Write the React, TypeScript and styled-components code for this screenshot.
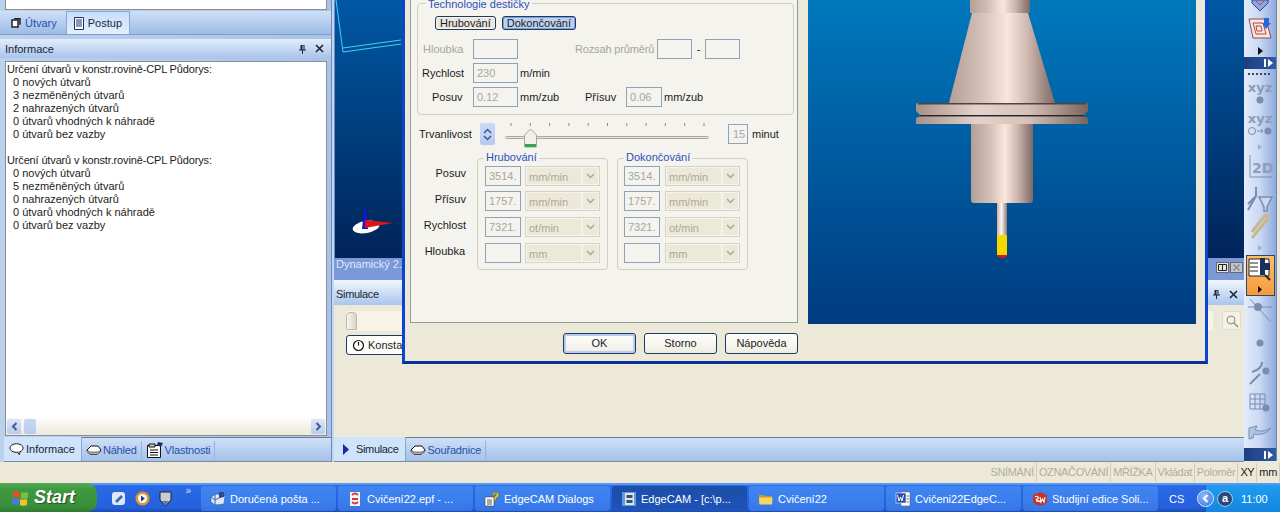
import React from "react";
import styled, { createGlobalStyle, css } from "styled-components";

const Global = createGlobalStyle`
  html, body { margin: 0; padding: 0; background: #ece9d8; overflow: hidden; }
  * { box-sizing: border-box; }
`;

const Screen = styled.div`
  position: relative;
  width: 1280px;
  height: 512px;
  overflow: hidden;
  display: flex;
  flex-direction: column;
  background: #ece9d8;
  font-family: "Liberation Sans", Arial, sans-serif;
  font-size: 11px;
  color: #1c1c1c;
`;
const Workspace = styled.div`
  display: flex;
  height: 462px;
  background: #c4d7ef;
`;
const LeftColumn = styled.div`
  width: 331px;
  display: flex;
  flex-direction: column;
  background: linear-gradient(90deg, #bcd1ee, #a9c3e8);
  padding-left: 5px;
  padding-right: 4px;
`;
const TopBox = styled.div`
  height: 10px;
  background: #fff;
  border: 1px solid #8a8f96;
  border-top: 0;
`;
const TopTabs = styled.div`
  height: 24px;
  margin: 1px -4px 0 -5px;
  display: flex;
  align-items: stretch;
  padding-left: 2px;
  background: linear-gradient(#cfe0f7, #9dbbe6);
  border-bottom: 1px solid #7f9dc6;
`;
const TopTab = styled.div<{ $active?: boolean }>`
  display: flex;
  align-items: center;
  gap: 4px;
  padding: 0 9px 0 9px;
  color: ${(p) => (p.$active ? "#1c2a3c" : "#2450a8")};
  ${(p) =>
    p.$active &&
    css`
      background: linear-gradient(#c9def8, #e2effc);
      border: 1px solid #8ba6cc;
      border-bottom: 0;
      padding: 0 7px 0 7px;
    `}
`;
const PanelHeader = styled.div`
  height: 19px;
  margin: 4px -4px 0 -5px;
  padding: 0 7px 0 5px;
  display: flex;
  align-items: center;
  justify-content: space-between;
  background: linear-gradient(#e1edfb, #a9c5ec);
  color: #1c2533;
`;
const PanelButtons = styled.div`
  display: flex;
  align-items: center;
  gap: 8px;
`;
const InfoBox = styled.div`
  margin-top: 3px;
  height: 375px;
  display: flex;
  flex-direction: column;
  background: #fff;
  border: 1px solid #8a8f96;
`;
const InfoText = styled.div`
  flex: 1;
  padding: 1px;
  line-height: 13px;
`;
const InfoLine = styled.div<{ $indent?: boolean }>`
  height: 13px;
  white-space: pre;
  padding-left: ${(p) => (p.$indent ? 6 : 0)}px;
  letter-spacing: ${(p) => (p.$indent ? 0 : -0.15)}px;
`;
const HScroll = styled.div`
  height: 17px;
  display: flex;
  justify-content: space-between;
  background: linear-gradient(#fcfbf7, #ece9dd);
`;
const ScrollBtn = styled.div`
  width: 14px;
  height: 15px;
  margin: 1px;
  background: linear-gradient(#dce6f8, #b9cbee);
  border-radius: 2px;
  display: flex;
  align-items: center;
  justify-content: center;
`;
const Thumb = styled.div`
  width: 12px;
  height: 15px;
  margin-top: 1px;
  margin-left: 2px;
  background: linear-gradient(#c9d8f3, #b9cbee);
  border-radius: 2px;
`;
const ScrollLeft = styled.div`
  display: flex;
`;
const BottomTabs = styled.div`
  height: 25px;
  margin: 1px -4px 0 -1px;
  display: flex;
  align-items: stretch;
  background: linear-gradient(#cfe0f7, #a4c1ea);
  border-top: 1px solid #6b7d96;
  border-bottom: 1px solid #7e8a9a;
`;
const BottomTab = styled.div<{ $active?: boolean }>`
  display: flex;
  align-items: center;
  gap: 1px;
  padding: 0 6px 0 5px;
  color: ${(p) => (p.$active ? "#1c2533" : "#2450a8")};
  ${(p) =>
    p.$active
      ? css`
          background: #cfe3fb;
          margin-top: -1px;
          border-right: 1px solid #8ba6cc;
        `
      : css`
          padding: 0 4px 0 4px;
          margin: 3px 0 2px;
          border-right: 1px solid #9cb1cf;
          letter-spacing: -0.2px;
        `}
`;
const Center = styled.div`
  position: relative;
  width: 913px;
  padding-left: 3px;
  display: flex;
  flex-direction: column;
  background: linear-gradient(90deg, #6f89b4 0, #6f89b4 1px, #c3d6f2 1px);
`;
const Viewport = styled.div`
  height: 258px;
  position: relative;
  background: linear-gradient(#0058a4, #002458);
  border-left: 1px solid #6f8fc4;
  overflow: hidden;
`;
const Sketch = styled.svg`
  position: absolute;
  left: 0;
  top: 0;
`;
const ViewCaption = styled.div`
  height: 22px;
  padding: 0 1px 0 2px;
  line-height: 13px;
  display: flex;
  align-items: flex-start;
  justify-content: space-between;
  background: #7b98d8;
  color: #dfe7fa;
  white-space: nowrap;
`;
const CaptionButtons = styled.div`
  display: flex;
  gap: 1px;
  margin-top: 4px;
`;
const CapBtn = styled.div<{ $off?: boolean }>`
  width: 13px;
  height: 11px;
  background: ${(p) => (p.$off ? "#c3c5c8" : "#e4e3dc")};
  border: 1px solid #6a6a6a;
  display: flex;
  align-items: center;
  justify-content: center;
`;
const SimHeader = styled(PanelHeader)`
  margin: 0;
  height: 25px;
  padding: 3px 6px 0 2px;
  letter-spacing: -0.3px;
  background: linear-gradient(#f2f6fd, #a9c5ec);
`;
const SimBody = styled.div`
  flex: 1;
  background: #ece9d8;
  padding: 6px 3px 0 12px;
`;
const SimRow = styled.div`
  display: flex;
  justify-content: space-between;
  align-items: flex-start;
  gap: 9px;
`;
const SimTrack = styled.div`
  flex: 1;
  height: 20px;
  background: #f6f4e8;
  border-radius: 3px;
`;
const SimHandle = styled.div`
  position: absolute;
  width: 11px;
  height: 18px;
  margin-top: 1px;
  background: linear-gradient(90deg, #f8f6ee, #d8d4c4);
  border: 1px solid #bdb9a8;
  border-radius: 4px 4px 1px 1px;
`;
const SearchBtn = styled.div`
  width: 19px;
  height: 19px;
  background: #f4f2e6;
  border: 1px solid #e0dccb;
  border-radius: 3px;
  display: flex;
  align-items: center;
  justify-content: center;
`;
const SimButton = styled.div`
  margin-top: 4px;
  width: 70px;
  height: 20px;
  display: flex;
  align-items: center;
  gap: 3px;
  padding-left: 5px;
  background: #fdfdfa;
  border: 1px solid #1d3a64;
  border-radius: 3px;
`;
const CenterTabs = styled(BottomTabs)`
  margin: 0;
`;
const Dialog = styled.div`
  position: absolute;
  left: 71px;
  top: 0;
  width: 806px;
  height: 364px;
  background: #ece9d8;
  border: 3px solid #0a44d0;
  border-top: 0;
  border-bottom-color: #0a2f9c;
  display: flex;
  flex-direction: column;
`;
const DialogMain = styled.div`
  display: flex;
  height: 324px;
  padding-left: 5px;
`;
const FormPanel = styled.div`
  width: 388px;
  height: 323px;
  background: #f4f3ee;
  border: 1px solid #919b9c;
  border-top: 0;
  padding: 3px 3px 0 6px;
`;
const Group = styled.fieldset`
  margin: 0;
  padding: 0;
  min-width: 0;
  border: 1px solid #d0d0bf;
  border-radius: 4px;
`;
const TechGroup = styled(Group)`
  height: 112px;
  padding: 0 0 0 4px;
  position: relative;
`;
const Legend = styled.div<{ $left?: number; $top?: number }>`
  position: absolute;
  top: ${(p) => p.$top ?? -8}px;
  left: ${(p) => p.$left ?? 8}px;
  padding: 0 2px;
  background: #f4f3ee;
  color: #2c50bc;
  line-height: 13px;
  white-space: nowrap;
`;
const TechButtons = styled.div`
  display: flex;
  gap: 6px;
  margin: 12px 0 0 13px;
`;
const ToggleBtn = styled.div<{ $on?: boolean }>`
  height: 14px;
  padding: 0 4px;
  line-height: 12px;
  border: 1px solid #1d3a64;
  border-radius: 3px;
  color: #1c1c1c;
  background: ${(p) => (p.$on ? "#bcd0ef" : "#e9e7dc")};
  box-shadow: inset 0 0 0 1px ${(p) => (p.$on ? "#7f9fd8" : "#f7f5ea")};
`;
const FieldRow = styled.div<{ $top: number }>`
  display: flex;
  align-items: center;
  height: 20px;
  margin-top: ${(p) => p.$top}px;
`;
const RowLabel = styled.div<{ $w: number; $muted?: boolean; $pad?: number }>`
  width: ${(p) => p.$w}px;
  padding-left: ${(p) => p.$pad ?? 0}px;
  color: ${(p) => (p.$muted ? "#a6a69c" : "#1c1c1c")};
  white-space: nowrap;
  flex: none;
`;
const RangeLabel = styled(RowLabel)`
  letter-spacing: -0.15px;
`;
const Input = styled.div<{ $w: number; $pad?: number }>`
  width: ${(p) => p.$w}px;
  height: 20px;
  flex: none;
  border: 1px solid #8ea2b8;
  background: #f4f3ee;
  color: #a7a79d;
  padding-left: ${(p) => p.$pad ?? 3}px;
  line-height: 18px;
  white-space: nowrap;
  overflow: hidden;
`;
const Unit = styled.div<{ $w?: number }>`
  margin-left: 2px;
  width: ${(p) => (p.$w ? `${p.$w}px` : "auto")};
  white-space: nowrap;
  flex: none;
`;
const RangeDash = styled.div`
  width: 13px;
  text-align: center;
  flex: none;
`;
const LifeRow = styled.div`
  display: flex;
  align-items: center;
  height: 26px;
  margin-top: 6px;
`;
const LifeLabel = styled.div`
  margin-left: 2px;
  width: 61px;
`;
const Spinner = styled.div`
  width: 15px;
  height: 22px;
  background: linear-gradient(#cdd9f6, #b8c9f0);
  border-radius: 2px;
  display: flex;
  flex-direction: column;
  align-items: center;
  justify-content: center;
  gap: 1px;
`;
const Slider = styled.div`
  width: 205px;
  height: 26px;
  margin-left: 10px;
`;
const Lifetime = styled.div`
  margin-left: 18px;
  display: flex;
  align-items: center;
  gap: 4px;
`;
const CutGroups = styled.div`
  display: flex;
  margin-top: 11px;
`;
const CutLabels = styled.div`
  width: 56px;
  padding-top: 2px;
`;
const CutLabel = styled.div<{ $r: number }>`
  height: 26px;
  line-height: 26px;
  text-align: right;
  padding-right: ${(p) => p.$r}px;
`;
const CutGroup = styled(Group)<{ $second?: boolean }>`
  position: relative;
  width: 131px;
  height: 112px;
  margin-left: ${(p) => (p.$second ? 9 : 4)}px;
  padding: 7px 0 0 ${(p) => (p.$second ? 6 : 7)}px;
`;
const CutRow = styled.div<{ $h: number; $gap: number }>`
  display: flex;
  gap: ${(p) => p.$gap}px;
  height: ${(p) => p.$h}px;
`;
const Select = styled.div`
  width: 75px;
  height: 20px;
  border: 1px solid #d6d3c4;
  padding: 1px;
  display: flex;
  background: #f4f3ee;
`;
const SelectValue = styled.div`
  flex: 1;
  background: #ece9d8;
  color: #aca899;
  padding-left: 2px;
  line-height: 18px;
`;
const SelectArrow = styled.div`
  width: 15px;
  margin-left: 2px;
  background: #ece9d8;
  display: flex;
  align-items: center;
  justify-content: center;
`;
const Preview = styled.div`
  position: relative;
  width: 388px;
  height: 324px;
  margin-left: 10px;
  background: linear-gradient(#0078bc, #003b80);
`;
const DialogButtons = styled.div`
  display: flex;
  gap: 8px;
  margin: 9px 0 0 158px;
`;
const DlgBtn = styled.div<{ $def?: boolean }>`
  width: 73px;
  height: 21px;
  text-align: center;
  line-height: 19px;
  border: 1px solid #1d3a64;
  border-radius: 3px;
  background: linear-gradient(#fefefd, #efede2);
  box-shadow: ${(p) => (p.$def ? "inset 0 0 0 2px #b6cdf0" : "none")};
`;
const Toolbar = styled.div`
  width: 36px;
  flex: none;
  padding-right: 3px;
  background: #ece9d8;
`;
const ToolStrip = styled.div`
  height: 461px;
  display: flex;
  flex-direction: column;
  align-items: center;
  background: linear-gradient(90deg, #e3ecfb 0%, #c9d8f3 50%, #8da9dc 100%);
  border-right: 1px solid #6e88b4;
`;
const ToolSlot = styled.div<{ $h: number }>`
  height: ${(p) => p.$h}px;
  width: 100%;
  display: flex;
  flex-direction: column;
  align-items: center;
  justify-content: center;
  flex: none;
`;
const ToolSpacer = styled.div`
  flex: 1;
`;
const Band = styled.div<{ $h: number }>`
  width: 100%;
  height: ${(p) => p.$h}px;
  flex: none;
  background: linear-gradient(90deg, #1c3f80, #2f5aa6);
  display: flex;
  align-items: center;
  justify-content: flex-end;
  padding-right: 3px;
`;
const Xyz = styled.div`
  font-family: "DejaVu Sans", sans-serif;
  font-weight: bold;
  font-size: 13px;
  line-height: 12px;
  color: #8e9cb4;
`;
const Orange = styled.div`
  width: 29px;
  height: 41px;
  flex: none;
  background: linear-gradient(#fbc06a, #f79a3c);
  border: 1px solid #34465e;
  display: flex;
  flex-direction: column;
  align-items: center;
  padding-top: 1px;
`;
const Status = styled.div`
  height: 21px;
  display: flex;
  justify-content: flex-end;
  align-items: stretch;
  padding: 1px 0;
  background: #ece9d8;
  letter-spacing: -0.35px;
`;
const StatusCell = styled.div<{ $on?: boolean }>`
  padding: 3px 2px 0 2px;
  border-right: 1px solid #cfccbb;
  color: ${(p) => (p.$on ? "#1c1c1c" : "#b0ad9c")};
  white-space: nowrap;
`;
const Taskbar = styled.div`
  height: 29px;
  display: flex;
  align-items: stretch;
  background: linear-gradient(#2f6fe6 0%, #2a69e6 10%, #2460dc 85%, #1b49b4 100%);
  border-top: 2px solid #5a97f2;
  color: #fff;
`;
const Start = styled.div`
  width: 97px;
  flex: none;
  margin-top: -2px;
  display: flex;
  align-items: center;
  gap: 4px;
  padding-left: 11px;
  background: linear-gradient(#5aa85a 0%, #3f9a3f 20%, #3a8e3a 80%, #2f7a2f 100%);
  border-radius: 0 10px 10px 0;
  font-style: italic;
  font-weight: bold;
  font-size: 18px;
  text-shadow: 1px 1px 1px #1e4e1e;
`;
const Quick = styled.div`
  width: 104px;
  flex: none;
  display: flex;
  align-items: center;
  gap: 9px;
  padding-left: 14px;
  position: relative;
`;
const QuickMore = styled.div`
  position: absolute;
  right: 10px;
  top: 1px;
  font-size: 10px;
  line-height: 10px;
  color: #cfe0ff;
`;
const Tasks = styled.div`
  display: flex;
  gap: 2px;
  margin-top: 1px;
  height: 25px;
`;
const Task = styled.div<{ $active?: boolean }>`
  width: 135px;
  display: flex;
  align-items: center;
  gap: 4px;
  padding-left: 9px;
  border-radius: 3px;
  white-space: nowrap;
  background: ${(p) =>
    p.$active
      ? "linear-gradient(#1c4ea8, #1e54b8)"
      : "linear-gradient(#3f85f0, #3a7cec 70%, #3573e2)"};
`;
const Tray = styled.div`
  flex: 1;
  display: flex;
  align-items: center;
`;
const Lang = styled.div`
  margin-left: 11px;
  width: 36px;
  flex: none;
`;
const TrayZone = styled.div`
  flex: 1;
  height: 100%;
  display: flex;
  align-items: center;
  gap: 3px;
  background: linear-gradient(#1f9cf0, #1485e2);
  border-left: 1px solid #0f5cc0;
`;
const Chevron = styled.div`
  width: 17px;
  height: 17px;
  flex: none;
  margin-left: -9px;
  border-radius: 50%;
  background: radial-gradient(circle at 40% 35%, #8fbdfa, #2f6fe0);
  border: 1px solid #e0ecff;
  display: flex;
  align-items: center;
  justify-content: center;
`;
const TrayIcon = styled.div`
  width: 16px;
  height: 16px;
  flex: none;
  border-radius: 50%;
  background: #2a4a7a;
  border: 1px solid #a8c8ee;
  font-size: 11px;
  font-weight: bold;
  line-height: 13px;
  text-align: center;
`;
const Clock = styled.div`
  margin-left: 5px;
`;

const Pin = () => (
  <svg width="9" height="10" viewBox="0 0 9 10">
    <path d="M2.500 1h4v4.500h1.500v1H1v-1h1.500zM4 6.500h1V10H4z" fill="#1c2533" />
    <path d="M4.500 1.500h1v4h-1z" fill="#c6d7ef" />
  </svg>
);
const CloseX = () => (
  <svg width="9" height="9" viewBox="0 0 9 9">
    <path d="M1 1l7 7M8 1L1 8" stroke="#1c2533" strokeWidth="1.600" />
  </svg>
);
const Bubble = () => (
  <svg width="16" height="14" viewBox="0 0 17 14">
    <ellipse cx="8" cy="6" rx="7" ry="4.600" fill="#fff" stroke="#111" />
    <path d="M9 10l2 3 1-3.600" fill="#fff" stroke="#111" />
  </svg>
);
const Slab = () => (
  <svg width="16" height="11" viewBox="0 0 16 11">
    <path d="M1 5l4-4h7l3 4-4 4H4z" fill="#fff" stroke="#111" />
    <path d="M1 5l3 2h8l3-2v1.500L11 9.500H4L1 6.500z" fill="#b0b0b0" stroke="#111" strokeWidth=".5" />
  </svg>
);
const Sheet = () => (
  <svg width="18" height="16" viewBox="0 0 18 16">
    <path d="M1.500 3.500h13v12h-13z" fill="#fff" stroke="#111" />
    <path d="M3 2h6v3H3z" fill="#c8c8c8" stroke="#111" />
    <path d="M4 8h8M4 10.500h8M4 13h8" stroke="#111" />
    <path d="M12 0l5 1-2 4-4-2z" fill="#1c2f5c" />
  </svg>
);
const Caret = () => (
  <svg width="9" height="6" viewBox="0 0 9 6">
    <path d="M1 1l3.500 3.500L8 1" fill="none" stroke="#aca899" strokeWidth="1.500" />
  </svg>
);
const ScrollArrow = ({ right }: { right?: boolean }) => (
  <svg width="7" height="9" viewBox="0 0 7 9">
    <path d={right ? "M1.500 1l3.500 3.500L1.500 8" : "M5.500 1L2 4.500 5.500 8"} fill="none" stroke="#3f5c8c" strokeWidth="2" />
  </svg>
);
const BandGlyph = () => (
  <svg width="9" height="8" viewBox="0 0 9 8">
    <path d="M0 0h2v8H0z" fill="#fff" />
    <path d="M4 0l5 4-5 4z" fill="#fff" />
  </svg>
);
const Win = () => (
  <svg width="19" height="18" viewBox="0 0 19 18">
    <path d="M2 3q3-1.500 7 0v6q-4-1.500-7 0z" fill="#e0502a" />
    <path d="M10 3q3 1.500 7 0v6q-4 1.500-7 0z" fill="#7cc043" />
    <path d="M1 10q3-1.500 7 0v6q-4-1.500-7 0z" fill="#3d7fe0" />
    <path d="M9 10q3 1.500 7 0v6q-4 1.500-7 0z" fill="#f2c230" />
  </svg>
);

const info = [
  ["Určení útvarů v konstr.rovině-CPL Půdorys:", false],
  ["0 nových útvarů", true],
  ["3 nezměněných útvarů", true],
  ["2 nahrazených útvarů", true],
  ["0 útvarů vhodných k náhradě", true],
  ["0 útvarů bez vazby", true],
  ["", false],
  ["Určení útvarů v konstr.rovině-CPL Půdorys:", false],
  ["0 nových útvarů", true],
  ["5 nezměněných útvarů", true],
  ["0 nahrazených útvarů", true],
  ["0 útvarů vhodných k náhradě", true],
  ["0 útvarů bez vazby", true],
] as [string, boolean][];

const cutRows = [
  { v: "3514.", u: "mm/min", h: 25 },
  { v: "1757.", u: "mm/min", h: 26 },
  { v: "7321.", u: "ot/min", h: 26 },
  { v: "", u: "mm", h: 26 },
];

const CutFields = ({ title, second }: { title: string; second?: boolean }) => (
  <CutGroup $second={second}>
    <Legend $left={6}>{title}</Legend>
    {cutRows.map((r, i) => (
      <CutRow key={i} $h={r.h} $gap={second ? 5 : 4}>
        <Input $w={36}>{r.v}</Input>
        <Select>
          <SelectValue>{r.u}</SelectValue>
          <SelectArrow><Caret /></SelectArrow>
        </Select>
      </CutRow>
    ))}
  </CutGroup>
);

const taskIcons: Record<string, React.ReactNode> = {
  mail: (
    <svg width="16" height="16" viewBox="0 0 16 16">
      <path d="M1 6l5-3 9 1-1 9-9 1-4-3z" fill="#dfe8f8" stroke="#3a5a90" strokeWidth=".6" />
      <path d="M5 3v11M1 6l4 3 10-5" fill="none" stroke="#3a6ab0" />
      <path d="M9 1h5v5l-5 1z" fill="#2a4a90" />
    </svg>
  ),
  epf: (
    <svg width="16" height="16" viewBox="0 0 16 16">
      <path d="M3 1h10v14H3z" fill="#f4f6fb" />
      <path d="M5 4q3-3 6 0M5 8h6M5 11q3 3 6 0" fill="none" stroke="#d03a3a" strokeWidth="1.800" />
    </svg>
  ),
  help: (
    <svg width="16" height="16" viewBox="0 0 16 16">
      <path d="M1 6h9v9H1z" fill="#fff" stroke="#444" strokeWidth=".6" />
      <path d="M3 9h5M3 11h5M3 13h5" stroke="#555" />
      <path d="M8 4q1-3 3.500-3t3.500 2.500q0 2-2.500 3.500l-.5 2.500h-2l.5-4q2-1 2-2t-1-1-1.500 2z" fill="#f0c820" stroke="#6a5410" strokeWidth=".5" />
    </svg>
  ),
  cam: (
    <svg width="16" height="16" viewBox="0 0 16 16">
      <rect x="1" y="1" width="14" height="14" fill="#5aa0e0" />
      <rect x="4" y="2" width="9" height="12" fill="#dfe4ea" />
      <path d="M5.500 4h6v3h-6zM5.500 9h6v3h-6z" fill="#39506e" />
    </svg>
  ),
  folder: (
    <svg width="16" height="16" viewBox="0 0 16 16">
      <path d="M1 4h5l1 1h7v8H1z" fill="#c89a28" />
      <path d="M1 6.500h13.500l-.5 7H1.500z" fill="#f4d66a" />
    </svg>
  ),
  word: (
    <svg width="16" height="16" viewBox="0 0 16 16">
      <path d="M6 1h9v14H6z" fill="#fff" stroke="#666" strokeWidth=".6" />
      <path d="M8 5h6M8 8h6M8 11h6" stroke="#777" />
      <rect x="1" y="2" width="10" height="10" fill="#2a4aa8" stroke="#fff" strokeWidth=".6" />
      <path d="M2.500 4l1.500 6 1.500-4 1.500 4 1.500-6" fill="none" stroke="#fff" />
    </svg>
  ),
  sw: (
    <svg width="16" height="16" viewBox="0 0 16 16">
      <path d="M8 1l7 3v8l-7 3-7-3V4z" fill="#c8322a" />
      <path d="M3 6q2-1.500 3 0t-1 2 2 2-3 0M8 6l1 5 1.500-3 1.500 3 1-5" fill="none" stroke="#fff" strokeWidth="1.100" />
    </svg>
  ),
};

const tasks = [
  { t: "Doručená pošta ...", i: "mail" },
  { t: "Cvičení22.epf - ...", i: "epf" },
  { t: "EdgeCAM Dialogs", i: "help" },
  { t: "EdgeCAM - [c:\\p...", i: "cam", active: true },
  { t: "Cvičení22", i: "folder" },
  { t: "Cvičeni22EdgeC...", i: "word" },
  { t: "Studijní edice Soli...", i: "sw" },
];

const Tool = () => (
  <svg width="388" height="324" viewBox="0 0 388 324" style={{ position: "absolute", left: 0, top: 0 }}>
    <defs>
      <linearGradient id="steel" x1="0" x2="1" y1="0" y2="0">
        <stop offset="0" stopColor="#b49f97" />
        <stop offset=".3" stopColor="#d4bfb6" />
        <stop offset=".55" stopColor="#fbe6dd" />
        <stop offset=".75" stopColor="#cdb6ad" />
        <stop offset="1" stopColor="#7c6a64" />
      </linearGradient>
      <linearGradient id="flange" x1="0" x2="1" y1="0" y2="0">
        <stop offset="0" stopColor="#a89088" />
        <stop offset=".35" stopColor="#e4d2ca" />
        <stop offset=".65" stopColor="#d8c2b8" />
        <stop offset="1" stopColor="#7a655e" />
      </linearGradient>
      <linearGradient id="shank" x1="0" x2="1" y1="0" y2="0">
        <stop offset="0" stopColor="#c8b4ac" />
        <stop offset=".45" stopColor="#fff4ee" />
        <stop offset="1" stopColor="#8d7a74" />
      </linearGradient>
    </defs>
    <rect x="162" y="0" width="60" height="13" fill="url(#steel)" />
    <path d="M164 13H220L247 103H141Z" fill="url(#steel)" />
    <path d="M108 104Q108 103 110 103H278Q280 103 280 104V111L276 115H112L108 111Z" fill="url(#flange)" />
    <rect x="110" y="103" width="168" height="1.500" fill="#54423c" />
    <rect x="112" y="115" width="164" height="1.500" fill="#2c2422" />
    <path d="M112 116.500H276L280 118V124H108V118Z" fill="url(#flange)" />
    <path d="M163 124H225V200Q225 203 222 203H166Q163 203 163 200Z" fill="url(#steel)" />
    <rect x="189" y="203" width="10" height="33" fill="url(#shank)" />
    <rect x="189" y="235" width="10" height="20" fill="#f4d800" />
    <path d="M189 255H199V256Q197 258 194 258Q191 258 189 256Z" fill="#d81818" />
  </svg>
);

export default function App() {
  return (
    <Screen>
      <Global />
      <Workspace>
        <LeftColumn>
          <TopBox />
          <TopTabs>
            <TopTab>
              <svg width="10" height="10" viewBox="0 0 10 10"><path d="M1 2h6v7H1z" fill="#fff" stroke="#222" strokeWidth="1.500" /><path d="M3 .8h6v6" fill="none" stroke="#222" strokeWidth="1.500" /></svg>
              Útvary
            </TopTab>
            <TopTab $active>
              <svg width="10" height="13" viewBox="0 0 10 13"><path d="M.5.500h9v12h-9z" fill="#fff" stroke="#1c2f6c" /><path d="M2 3h6M2 5h6M2 7h6M2 9h6" stroke="#1c2f6c" /></svg>
              Postup
            </TopTab>
          </TopTabs>
          <PanelHeader>
            Informace
            <PanelButtons><Pin /><CloseX /></PanelButtons>
          </PanelHeader>
          <InfoBox>
            <InfoText>
              {info.map(([t, ind], i) => (
                <InfoLine key={i} $indent={ind}>{t}</InfoLine>
              ))}
            </InfoText>
            <HScroll>
              <ScrollLeft>
                <ScrollBtn><ScrollArrow /></ScrollBtn>
                <Thumb />
              </ScrollLeft>
              <ScrollBtn><ScrollArrow right /></ScrollBtn>
            </HScroll>
          </InfoBox>
          <BottomTabs>
            <BottomTab $active><Bubble />Informace</BottomTab>
            <BottomTab><Slab />Náhled</BottomTab>
            <BottomTab><Sheet />Vlastnosti</BottomTab>
          </BottomTabs>
        </LeftColumn>
        <Center>
          <Viewport>
            <Sketch width="80" height="258" viewBox="0 0 80 258">
              <path d="M1 0L8 52M8 48L66 40M8 52L66 44" fill="none" stroke="#3fd4f4" strokeWidth="1" />
              <ellipse cx="31" cy="227" rx="13.500" ry="6" fill="#fff" transform="rotate(-10 31 227)" />
              <path d="M30 203L33 229L27 229Z" fill="#1414e0" />
              <path d="M30 220L58 223L30 228Z" fill="#e01414" />
            </Sketch>
          </Viewport>
          <ViewCaption>
            Dynamický 2.
            <CaptionButtons>
              <CapBtn>
                <svg width="9" height="7" viewBox="0 0 9 7"><path d="M.5.500h8v6h-8zM4.500.500v6" fill="none" stroke="#222" /></svg>
              </CapBtn>
              <CapBtn $off>
                <svg width="7" height="7" viewBox="0 0 7 7"><path d="M.5.500l6 6M6.500.500l-6 6" stroke="#888" strokeWidth="1.300" /></svg>
              </CapBtn>
            </CaptionButtons>
          </ViewCaption>
          <SimHeader>
            Simulace
            <PanelButtons><Pin /><CloseX /></PanelButtons>
          </SimHeader>
          <SimBody>
            <SimRow>
              <SimHandle />
              <SimTrack />
              <SearchBtn>
                <svg width="14" height="14" viewBox="0 0 14 14"><circle cx="6" cy="6" r="4" fill="none" stroke="#8a8a8a" /><path d="M9 9l4 4" stroke="#8a8a8a" strokeWidth="1.500" /></svg>
              </SearchBtn>
            </SimRow>
            <SimButton>
              <svg width="13" height="13" viewBox="0 0 13 13"><circle cx="6.500" cy="6.500" r="5" fill="#fff" stroke="#111" strokeWidth="1.200" /><path d="M6.500 3v3.500" stroke="#111" strokeWidth="1.200" /></svg>
              Konstan
            </SimButton>
          </SimBody>
          <CenterTabs style={{ letterSpacing: "-0.35px" }}>
            <BottomTab $active style={{ padding: "0 7px 0 8px", gap: 6 }}>
              <svg width="8" height="13" viewBox="0 0 8 13"><path d="M1 1l6 5.500L1 12z" fill="#1a2a9c" /></svg>
              Simulace
            </BottomTab>
            <BottomTab><Slab />Souřadnice</BottomTab>
          </CenterTabs>
          <Dialog>
            <DialogMain>
              <FormPanel>
                <TechGroup>
                  <Legend $top={-6}>Technologie destičky</Legend>
                  <TechButtons>
                    <ToggleBtn>Hrubování</ToggleBtn>
                    <ToggleBtn $on>Dokončování</ToggleBtn>
                  </TechButtons>
                  <FieldRow $top={9}>
                    <RowLabel $w={51} $muted $pad={1}>Hloubka</RowLabel>
                    <Input $w={45} />
                    <RangeLabel $w={139} $muted $pad={57}>Rozsah průměrů</RangeLabel>
                    <Input $w={35} />
                    <RangeDash>-</RangeDash>
                    <Input $w={35} />
                  </FieldRow>
                  <FieldRow $top={4}>
                    <RowLabel $w={51}>Rychlost</RowLabel>
                    <Input $w={45}>230</Input>
                    <Unit>m/min</Unit>
                  </FieldRow>
                  <FieldRow $top={4}>
                    <RowLabel $w={51} $pad={10}>Posuv</RowLabel>
                    <Input $w={45}>0.12</Input>
                    <Unit $w={65}>mm/zub</Unit>
                    <RowLabel $w={41}>Přísuv</RowLabel>
                    <Input $w={36}>0.06</Input>
                    <Unit>mm/zub</Unit>
                  </FieldRow>
                </TechGroup>
                <LifeRow>
                  <LifeLabel>Trvanlivost</LifeLabel>
                  <Spinner>
                    <svg width="9" height="6" viewBox="0 0 9 6"><path d="M1 5l3.500-3.500L8 5" fill="none" stroke="#3c5a94" strokeWidth="1.500" /></svg>
                    <svg width="9" height="6" viewBox="0 0 9 6"><path d="M1 1l3.500 3.500L8 1" fill="none" stroke="#3c5a94" strokeWidth="1.500" /></svg>
                  </Spinner>
                  <Slider>
                    <svg width="205" height="27" viewBox="0 0 205 27">
                      {Array.from({ length: 11 }).map((_, i) => (
                        <path key={i} d={`M${6 + i * 19.3} 2v3`} stroke="#888" />
                      ))}
                      <rect x=".5" y="15.500" width="203" height="2" rx="1" fill="#e8e6dc" stroke="#a8a89c" />
                      <path d="M19.500 14l6-6 6 6v12h-12z" fill="#f2f0e6" stroke="#a8a89c" />
                      <rect x="20" y="23" width="11" height="3" fill="#2fa84a" />
                    </svg>
                  </Slider>
                  <Lifetime>
                    <Input $w={20} $pad={4}>15</Input>
                    <span>minut</span>
                  </Lifetime>
                </LifeRow>
                <CutGroups>
                  <CutLabels>
                    <CutLabel $r={7}>Posuv</CutLabel>
                    <CutLabel $r={7}>Přísuv</CutLabel>
                    <CutLabel $r={7}>Rychlost</CutLabel>
                    <CutLabel $r={8}>Hloubka</CutLabel>
                  </CutLabels>
                  <CutFields title="Hrubování" />
                  <CutFields title="Dokončování" second />
                </CutGroups>
              </FormPanel>
              <Preview><Tool /></Preview>
            </DialogMain>
            <DialogButtons>
              <DlgBtn $def>OK</DlgBtn>
              <DlgBtn>Storno</DlgBtn>
              <DlgBtn>Nápověda</DlgBtn>
            </DialogButtons>
          </Dialog>
        </Center>
        <Toolbar>
          <ToolStrip>
            <ToolSlot $h={12}>
              <svg width="20" height="12" viewBox="0 0 20 12"><path d="M2 0h16v3l-8 8-8-8z" fill="#8ea6dc" stroke="#2c49a0" /><path d="M6 1l4 4 4-4" fill="none" stroke="#c04060" /></svg>
            </ToolSlot>
            <ToolSlot $h={32}>
              <svg width="24" height="24" viewBox="0 0 24 24"><path d="M1 3h17l5 19H5z" fill="#f4e8e0" stroke="#8a4a5a" /><path d="M5 7h10l3 11H8zM8 10h5l1 5H9z" fill="none" stroke="#c04040" /><path d="M16 2h5v5h2l-5 6-4-6h2z" fill="#2a66d8" /></svg>
            </ToolSlot>
            <ToolSlot $h={13}><svg width="5" height="8" viewBox="0 0 5 8"><path d="M0 0l5 4-5 4z" fill="#111" /></svg></ToolSlot>
            <Band $h={12}><BandGlyph /></Band>
            <ToolSlot $h={10}>
              <svg width="24" height="2" viewBox="0 0 24 2"><path d="M0 1h24" stroke="#33466a" strokeWidth="2" strokeDasharray="2 2" /></svg>
            </ToolSlot>
            <ToolSlot $h={27}>
              <Xyz>xyz</Xyz>
              <svg width="8" height="8" viewBox="0 0 8 8" style={{ marginTop: 2 }}><circle cx="4" cy="4" r="3.500" fill="#7a8cb0" /></svg>
            </ToolSlot>
            <ToolSlot $h={37}>
              <Xyz>xyz</Xyz>
              <svg width="24" height="10" viewBox="0 0 24 10" style={{ marginTop: 1 }}><circle cx="4" cy="5" r="3.500" fill="none" stroke="#7a8cb0" /><path d="M9 5h6M13 3l2 2-2 2" fill="none" stroke="#7a8cb0" /><circle cx="20" cy="5" r="3.500" fill="#7a8cb0" /></svg>
            </ToolSlot>
            <ToolSlot $h={7}><svg width="4" height="6" viewBox="0 0 4 6"><path d="M0 0l4 3-4 3z" fill="#9fb0cc" /></svg></ToolSlot>
            <ToolSlot $h={36}>
              <svg width="26" height="28" viewBox="0 0 26 28"><path d="M3 1v22h22" fill="none" stroke="#7a8cb0" /><text x="5" y="19" fontFamily="DejaVu Sans, sans-serif" fontSize="14" fontWeight="bold" fill="#8e9cb4">2D</text></svg>
            </ToolSlot>
            <ToolSlot $h={26}>
              <svg width="26" height="26" viewBox="0 0 26 26"><path d="M9 1v9L1 18M9 10l-8 14" fill="none" stroke="#7a8cb0" strokeWidth="2" /><path d="M12 11h13l-5 10v4h-3v-4z" fill="#ccd8ee" stroke="#7a8cb0" strokeWidth="1.500" /></svg>
            </ToolSlot>
            <ToolSlot $h={29}>
              <svg width="22" height="26" viewBox="0 0 22 26"><path d="M3 24L17 7q3-4 1-5t-5 3L3 18" fill="none" stroke="#c9b78c" strokeWidth="3" /></svg>
            </ToolSlot>
            <ToolSlot $h={14}><svg width="4" height="6" viewBox="0 0 4 6"><path d="M0 0l4 3-4 3z" fill="#9fb0cc" /></svg></ToolSlot>
            <Orange>
              <svg width="24" height="26" viewBox="0 0 24 26"><path d="M1 2h20v17H1z" fill="#fff" stroke="#222" /><path d="M12 1h5v5h5v7h-5v5h-5z" fill="#1c2f5c" /><path d="M2 6h8M2 10h8M2 14h8" stroke="#222" /><path d="M17 18l5 5" stroke="#222" strokeWidth="2" /></svg>
              <svg width="4" height="7" viewBox="0 0 4 7" style={{ marginTop: 3 }}><path d="M0 0l4 3.500-4 3.500z" fill="#111" /></svg>
            </Orange>
            <ToolSlot $h={30}>
              <svg width="26" height="26" viewBox="0 0 26 26"><path d="M1 9h24M3 1l20 22" stroke="#7a8cb0" /><circle cx="11" cy="9" r="4" fill="#7a8cb0" /></svg>
            </ToolSlot>
            <ToolSlot $h={34}>
              <svg width="8" height="8" viewBox="0 0 8 8"><circle cx="4" cy="4" r="3.500" fill="#7a8cb0" /></svg>
            </ToolSlot>
            <ToolSlot $h={26}>
              <svg width="24" height="24" viewBox="0 0 24 24"><path d="M14 1q0 7-10 10M2 23l10-10" fill="none" stroke="#7a8cb0" strokeWidth="2" /><circle cx="18" cy="10" r="3.500" fill="#7a8cb0" /></svg>
            </ToolSlot>
            <ToolSlot $h={34}>
              <svg width="22" height="20" viewBox="0 0 22 20"><path d="M1 1h15v15H1zM1 6h15M1 11h15M6 1v15M11 1v15" fill="none" stroke="#7a8cb0" /><circle cx="17" cy="15" r="3.500" fill="#7a8cb0" /></svg>
            </ToolSlot>
            <ToolSlot $h={24}>
              <svg width="24" height="16" viewBox="0 0 24 16"><path d="M1 15l0-11 8-2-2 4q8 3 16-2-6 8-17 6l-1 4z" fill="#b0c4e4" stroke="#7a8cb0" /></svg>
            </ToolSlot>
            <ToolSpacer />
            <Band $h={13}><BandGlyph /></Band>
          </ToolStrip>
        </Toolbar>
      </Workspace>
      <Status>
        <StatusCell>SNÍMÁNÍ</StatusCell>
        <StatusCell>OZNAČOVÁNÍ</StatusCell>
        <StatusCell>MŘÍŽKA</StatusCell>
        <StatusCell>Vkládat</StatusCell>
        <StatusCell>Poloměr</StatusCell>
        <StatusCell $on>XY</StatusCell>
        <StatusCell $on>mm</StatusCell>
      </Status>
      <Taskbar>
        <Start><Win />Start</Start>
        <Quick>
          <svg width="15" height="15" viewBox="0 0 15 15"><rect x="1" y="1" width="13" height="13" rx="3" fill="#dfe8f8" /><path d="M4 10l6-6 2 2-6 6z" fill="#3a6ab0" /></svg>
          <svg width="15" height="15" viewBox="0 0 15 15"><circle cx="7.500" cy="7.500" r="7" fill="#e8902a" /><circle cx="7.500" cy="7.500" r="4.500" fill="#fff" /><path d="M6 4.500l4 3-4 3z" fill="#1c3f80" /></svg>
          <svg width="13" height="16" viewBox="0 0 13 16"><path d="M1 1h11v8l-5.500 6L1 9z" fill="#c8ccd4" stroke="#222" /><path d="M3 10h7l-3.500 4z" fill="#5a7ab0" /></svg>
          <QuickMore>»</QuickMore>
        </Quick>
        <Tasks>
          {tasks.map((t) => (
            <Task key={t.t} $active={t.active}>
              {taskIcons[t.i]}
              {t.t}
            </Task>
          ))}
        </Tasks>
        <Tray>
          <Lang>CS</Lang>
          <TrayZone>
            <Chevron>
              <svg width="7" height="9" viewBox="0 0 7 9"><path d="M5.500 1L2 4.500 5.500 8" fill="none" stroke="#fff" strokeWidth="2" /></svg>
            </Chevron>
            <TrayIcon>a</TrayIcon>
            <Clock>11:00</Clock>
          </TrayZone>
        </Tray>
      </Taskbar>
    </Screen>
  );
}
